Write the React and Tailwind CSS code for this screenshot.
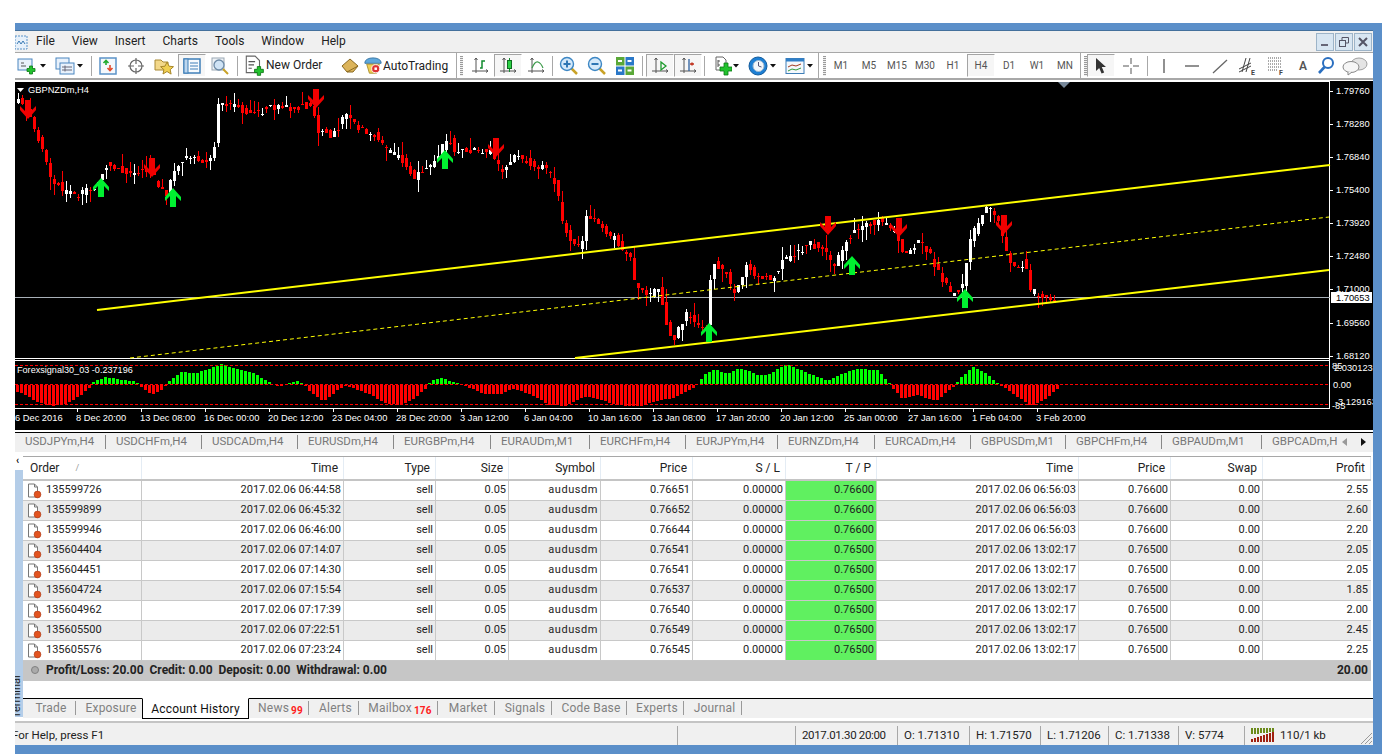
const PRICE = [[14,100],[18,102],[28,112],[40,145],[50,175],[62,190],[80,195],[95,185],[105,165],[125,172],[140,170],[150,170],[165,195],[175,165],[190,155],[205,165],[213,157],[218,103],[235,105],[250,115],[270,108],[290,108],[310,105],[318,130],[330,135],[340,125],[343,118],[349,118],[355,127],[365,130],[375,135],[385,150],[395,155],[405,165],[415,178],[425,168],[435,160],[442,148],[448,135],[455,155],[465,150],[475,150],[490,150],[498,165],[503,175],[510,160],[520,157],[530,162],[535,165],[545,170],[553,178],[558,200],[562,220],[568,238],[575,243],[580,250],[585,220],[592,215],[600,222],[608,235],[615,240],[622,250],[630,255],[635,285],[645,295],[660,290],[666,325],[672,340],[685,315],[700,325],[707,325],[711,262],[725,270],[733,295],[745,268],[770,280],[785,258],[810,243],[825,250],[833,270],[845,240],[860,225],[880,220],[895,235],[905,255],[920,240],[935,265],[950,295],[962,285],[970,240],[985,210],[997,215],[1005,250],[1015,270],[1025,260],[1030,290],[1040,297],[1056,300]]

const HIST = [[16,-7],[25,-10],[35,-17],[50,-21],[65,-19],[80,-10],[88,-3],[92,2],[105,7],[120,4],[133,3],[140,-2],[150,-10],[160,-5],[165,0],[170,5],[180,12],[195,11],[205,14],[220,20],[235,15],[250,12],[262,5],[270,1],[278,-2],[290,2],[295,3],[303,0],[310,-8],[322,-17],[335,-6],[345,-1],[352,-3],[370,-10],[385,-19],[400,-20],[415,-12],[425,-3],[430,3],[440,6],[454,1],[463,-1],[476,-6],[483,-9],[499,-9],[511,-4],[522,-7],[533,-11],[547,-20],[565,-21],[576,-15],[586,-11],[597,-14],[611,-19],[626,-21],[640,-21],[654,-16],[672,-13],[686,-6],[695,-1],[704,10],[713,15],[726,10],[736,15],[747,14],[756,9],[767,9],[778,16],[786,20],[797,15],[811,9],[827,3],[836,8],[854,15],[877,14],[886,3],[894,-6],[901,-14],[915,-10],[935,-16],[947,-6],[954,0],[961,8],[972,17],[985,11],[995,1],[1001,-1],[1010,-8],[1030,-21],[1045,-13],[1060,-1]]

const PRICE_LABELS = [['1.79760',91],['1.78280',124],['1.76840',157],['1.75400',190],['1.73920',223],['1.72480',256],['1.71000',289],['1.69560',323],['1.68120',356]]
const TIME_LABELS = ['6 Dec 2016','8 Dec 20:00','13 Dec 08:00','16 Dec 00:00','20 Dec 12:00','23 Dec 04:00','28 Dec 20:00','3 Jan 12:00','6 Jan 04:00','10 Jan 16:00','13 Jan 08:00','17 Jan 20:00','20 Jan 12:00','25 Jan 00:00','27 Jan 16:00','1 Feb 04:00','3 Feb 20:00']
const RED_ARROWS = [[28,100],[152,158],[316,89],[496,138],[828,216],[899,218],[1004,215]]
const GREEN_ARROWS = [[101,178],[173,188],[445,150],[709,323],[852,256],[965,289]]

const CHART_TABS = [['USDJPYm,H4',91],['USDCHFm,H4',96],['USDCADm,H4',96],['EURUSDm,H4',96],['EURGBPm,H4',97],['EURAUDm,M1',99],['EURCHFm,H4',96],['EURJPYm,H4',92],['EURNZDm,H4',97],['EURCADm,H4',96],['GBPUSDm,M1',95],['GBPCHFm,H4',96],['GBPAUDm,M1',100]]

const ROWS = [
  ['135599726','2017.02.06 06:44:58','0.76651','0.76600','2017.02.06 06:56:03','0.76600','2.55'],
  ['135599899','2017.02.06 06:45:32','0.76652','0.76600','2017.02.06 06:56:03','0.76600','2.60'],
  ['135599946','2017.02.06 06:46:00','0.76644','0.76600','2017.02.06 06:56:03','0.76600','2.20'],
  ['135604404','2017.02.06 07:14:07','0.76541','0.76500','2017.02.06 13:02:17','0.76500','2.05'],
  ['135604451','2017.02.06 07:14:30','0.76541','0.76500','2017.02.06 13:02:17','0.76500','2.05'],
  ['135604724','2017.02.06 07:15:54','0.76537','0.76500','2017.02.06 13:02:17','0.76500','1.85'],
  ['135604962','2017.02.06 07:17:39','0.76540','0.76500','2017.02.06 13:02:17','0.76500','2.00'],
  ['135605500','2017.02.06 07:22:51','0.76549','0.76500','2017.02.06 13:02:17','0.76500','2.45'],
  ['135605576','2017.02.06 07:23:24','0.76545','0.76500','2017.02.06 13:02:17','0.76500','2.25'],
]

const COLS = 'grid grid-cols-[119px_202px_92px_73px_92px_92px_93px_91px_202px_92px_92px_108px]'
const HEAD = ['Time','Type','Size','Symbol','Price','S / L','T / P','Time','Price','Swap','Profit']
const CELL = 'flex items-center justify-end pr-[2px] pb-[2px] border-r border-b border-[#c8c8c8]'

const interp = (pts, x) => {
  for (let i = 1; i < pts.length; i++) {
    if (x <= pts[i][0]) {
      const [x0, y0] = pts[i - 1]
      const [x1, y1] = pts[i]
      return y0 + ((y1 - y0) * (x - x0)) / (x1 - x0)
    }
  }
  return pts[pts.length - 1][1]
}

const noise = (n) => {
  const v = Math.sin(n * 12.9898) * 43758.5453
  return v - Math.floor(v)
}

function Candles() {
  const bars = []
  for (let i = 0; i < 260; i++) {
    const x = 18 + i * 4
    const open = interp(PRICE, x - 4) + (noise(i + 1) - 0.5) * 8
    const close = interp(PRICE, x) + (noise(i + 300) - 0.5) * 8
    const up = close < open
    const top = Math.round(Math.min(open, close))
    const bottom = Math.round(Math.max(open, close))
    const above = Math.round(noise(i + 600) ** 2 * 13)
    const below = Math.round(noise(i + 900) ** 2 * 13)
    bars.push(
      <g key={i} fill={up ? '#ffffff' : '#ff0000'}>
        <rect x={x} y={top - above} width="1" height={bottom - top + above + below} />
        <rect x={x - 1} y={top} width="3" height={Math.max(bottom - top, 1)} />
      </g>
    )
  }
  return bars
}

function Histogram() {
  const bars = []
  for (let x = 16; x < 1060; x += 4) {
    const v = Math.round(interp(HIST, x))
    if (v === 0) continue
    bars.push(<rect key={x} x={x} y={v > 0 ? 384 - v : 385} width="3" height={Math.abs(v)} fill={v > 0 ? '#00ff00' : '#ff0000'} />)
  }
  return bars
}

function Chart() {
  return (
    <svg width="1358" height="349" viewBox="15 81 1358 349" className="block font-['Liberation_Sans',sans-serif]">
      <rect x="15" y="81" width="1358" height="349" fill="#000" />
      <g shapeRendering="crispEdges">
        <rect x="15" y="81" width="1315" height="1" fill="#fff" />
        <rect x="1329" y="81" width="1" height="327" fill="#fff" />
        <rect x="15" y="358" width="1315" height="1" fill="#fff" />
        <rect x="15" y="360" width="1315" height="1" fill="#fff" />
        <rect x="15" y="408" width="1315" height="1" fill="#fff" />
        <rect x="15" y="297" width="1315" height="1" fill="#a8b0b8" />
        {PRICE_LABELS.map(([, y]) => <rect key={y} x="1330" y={y} width="3" height="1" fill="#fff" />)}
        {TIME_LABELS.map((_, i) => <rect key={i} x={13 + i * 64} y="408" width="1" height="4" fill="#fff" />)}
      </g>
      <polygon points="1058,82 1070,82 1064,88" fill="#77889a" />
      <g shapeRendering="crispEdges">
        <Candles />
      </g>
      <line x1="97" y1="310" x2="1330" y2="165" stroke="#ffff00" strokeWidth="2" />
      <line x1="575" y1="358" x2="1329" y2="270" stroke="#ffff00" strokeWidth="2" />
      <line x1="130" y1="358" x2="1329" y2="217" stroke="#ffff00" strokeWidth="1" strokeDasharray="4 3" />
      {RED_ARROWS.map(([x, y]) => (
        <polygon key={x} points={`${x - 3},${y} ${x + 3},${y} ${x + 3},${y + 11} ${x + 8},${y + 6} ${x + 8},${y + 10} ${x},${y + 19} ${x - 8},${y + 10} ${x - 8},${y + 6} ${x - 3},${y + 11}`} fill="#f00000" />
      ))}
      {GREEN_ARROWS.map(([x, y]) => (
        <polygon key={x} points={`${x},${y} ${x + 8},${y + 9} ${x + 8},${y + 13} ${x + 3},${y + 8} ${x + 3},${y + 19} ${x - 3},${y + 19} ${x - 3},${y + 8} ${x - 8},${y + 13} ${x - 8},${y + 9}`} fill="#00f030" />
      ))}
      <polygon points="17,88 24,88 20.5,92" fill="#fff" />
      <text x="28" y="93" fontSize="9.3" fill="#fff">GBPNZDm,H4</text>
      <Histogram />
      <g stroke="#ff0000" strokeDasharray="3 2" shapeRendering="crispEdges">
        <line x1="15" y1="365.5" x2="1329" y2="365.5" />
        <line x1="15" y1="384.5" x2="1329" y2="384.5" />
        <line x1="15" y1="404.5" x2="1329" y2="404.5" />
      </g>
      <text x="17" y="373" fontSize="9.1" fill="#fff">Forexsignal30_03 -0.237196</text>
      <g fontSize="9.3" fill="#fff">
        {PRICE_LABELS.map(([label, y]) => <text key={y} x="1336" y={y + 3}>{label}</text>)}
        {TIME_LABELS.map((label, i) => <text key={i} x={12 + i * 64 + (i === 0 ? 3 : 0)} y="421">{label}</text>)}
        <text x="1332" y="369">85</text>
        <text x="1334" y="371">2.030123</text>
        <text x="1333" y="388">0.00</text>
        <text x="1335" y="405">-3.129163</text>
        <text x="1332" y="409">-85</text>
      </g>
      <rect x="1331" y="292" width="41" height="11" fill="#fff" />
      <text x="1336" y="301" fontSize="9.3" fill="#000">1.70653</text>
    </svg>
  )
}

function Btn({ w, active, children, className = '' }) {
  return (
    <div style={{ width: w }} className={`h-[23px] flex items-center justify-center shrink-0 ${active ? 'border border-t-[#a4a4a4] border-l-[#a4a4a4] border-r-white border-b-white bg-[#f6f6f6]' : ''} ${className}`}>
      {children}
    </div>
  )
}

const Sep = ({ w = 5 }) => (
  <div style={{ width: w }} className="h-[20px] flex justify-center shrink-0">
    <div className="w-px h-full bg-[#a8a8a8]" />
  </div>
)

const Divider = ({ w = 5 }) => (
  <div style={{ width: w }} className="h-[26px] flex justify-center shrink-0">
    <div className="w-px h-full bg-[#a8a8a8]" />
  </div>
)

const Grip = ({ w = 5 }) => (
  <div style={{ width: w }} className="h-[20px] flex justify-center shrink-0">
    <div className="w-[3px] h-full bg-[repeating-linear-gradient(#9a9a9a_0_1px,#f0f0f0_1px_2px)]" />
  </div>
)

const Caret = ({ w = 10 }) => (
  <div style={{ width: w }} className="flex justify-center shrink-0">
    <svg width="6" height="4"><polygon points="0,0 6,0 3,3.5" fill="#111" /></svg>
  </div>
)

const Ico = ({ children, size = 20 }) => (
  <svg width={size} height={size} viewBox="0 0 20 20" fill="none">{children}</svg>
)

const Plus = ({ x = 10, y = 10 }) => (
  <path transform={`translate(${x} ${y})`} d="M2.5 0h3v2.5H8v3H5.5V8h-3V5.5H0v-3h2.5z" fill="#22c22e" stroke="#0b7a14" strokeWidth=".8" />
)

const Axes = () => (
  <path d="M6 2v15M2 15h16M4.5 4L6 2l1.5 2M16 13.5l2 1.5-2 1.5" stroke="#555" />
)

const Lens = ({ sign }) => (
  <>
    <path d="M12 12l6 6" stroke="#c9a227" strokeWidth="2.5" />
    <circle cx="8" cy="8" r="6.5" fill="#d5e9fa" stroke="#3d87c4" strokeWidth="1.4" />
    <path d={sign === '+' ? 'M4.5 8h7M8 4.5v7' : 'M4.5 8h7'} stroke="#2f77b5" strokeWidth="2" />
  </>
)

function Toolbar() {
  return (
    <div className="h-[26px] flex items-center border-t border-[#a8a8a8] pl-[2px] shrink-0 text-[#222]">
      <Btn w={20}>
        <Ico>
          <rect x="1" y="3" width="14" height="11" fill="#e8f1fb" stroke="#4a86c0" />
          <path d="M4 7h3M4 10h5" stroke="#555" />
          <Plus />
        </Ico>
      </Btn>
      <Caret w={12} />
      <Btn w={20} className="ml-[6px]">
        <Ico>
          <rect x="1" y="2" width="13" height="11" fill="#e8f1fb" stroke="#4a86c0" />
          <rect x="5" y="7" width="14" height="11" fill="#e8f1fb" stroke="#4a86c0" />
          <path d="M7 11h10M7 14h10M10 9.5v6" stroke="#667" />
        </Ico>
      </Btn>
      <Caret />
      <Sep w={13} />
      <Btn w={20}>
        <Ico>
          <rect x="2" y="2" width="16" height="16" fill="#f4f8fc" stroke="#5b93c8" strokeWidth="1.5" />
          <path d="M8 9V5M5.5 7L8 4.5 10.5 7" stroke="#1faa2e" strokeWidth="1.6" />
          <path d="M12 9v5M9.5 12l2.5 2.5 2.5-2.5" stroke="#e2492a" strokeWidth="1.6" />
        </Ico>
      </Btn>
      <Btn w={28} className="ml-[4px]">
        <Ico>
          <circle cx="10" cy="10" r="6" stroke="#666" strokeWidth="1.2" />
          <path d="M10 2v6M10 12v6M2 10h6M12 10h6" stroke="#666" strokeWidth="1.2" />
        </Ico>
      </Btn>
      <Btn w={28}>
        <Ico>
          <path d="M1 4h6l2 2h5v8H1z" fill="#f3d88a" stroke="#a98a35" />
          <path d="M13 6l2 4.2 4.5.5-3.3 3 .9 4.4L13 15.5 9 18l.9-4.3-3.3-3 4.4-.5z" fill="#f0cf52" stroke="#a8872a" />
        </Ico>
      </Btn>
      <Btn w={28} active>
        <Ico>
          <rect x="2" y="3" width="16" height="14" fill="#f6fafd" stroke="#3f7fb8" strokeWidth="1.5" />
          <rect x="2" y="3" width="4" height="14" fill="#bcd6ee" stroke="#3f7fb8" />
          <path d="M8 7h8M8 10h8M8 13h8" stroke="#3f7fb8" />
        </Ico>
      </Btn>
      <Btn w={28}>
        <Ico>
          <rect x="2" y="2" width="12" height="12" fill="#eef2f6" stroke="#9aa7b3" />
          <circle cx="9" cy="9" r="5" fill="#cfe3f5" stroke="#6d8aa6" strokeWidth="1.3" />
          <path d="M13 13l5 5" stroke="#c9a227" strokeWidth="2" />
        </Ico>
      </Btn>
      <Sep w={6} />
      <Btn w={90} className="justify-start">
        <div className="ml-[3px] mr-[1px]">
          <Ico size={22}>
            <path d="M3 1h8l4 4v11H3z" fill="#fff" stroke="#666" />
            <path d="M5 6h6M5 9h5M5 12h3" stroke="#555" />
            <Plus x={10.5} y={10.5} />
          </Ico>
        </div>
        <span className="text-[12px] -mt-[1px]">New Order</span>
      </Btn>
      <Btn w={28} className="ml-[6px]">
        <Ico>
          <path d="M2 10l8-7 8 7-5 6H7z" fill="#dcb45a" stroke="#8a6a22" />
          <path d="M7 16l11-6" stroke="#8a6a22" />
        </Ico>
      </Btn>
      <Btn w={90} className="justify-start">
        <div className="mr-[1px]">
          <Ico size={18}>
            <path d="M1 6a9 5 0 0 1 18 0v1H1z" fill="#5fa8dc" stroke="#2f6f9f" />
            <path d="M3 8h14l-3 10H6z" fill="#f1cf55" stroke="#a78d2d" />
            <circle cx="13" cy="13" r="4.5" fill="#d33" stroke="#fff" />
            <rect x="11.6" y="11.6" width="2.8" height="2.8" fill="#fff" />
          </Ico>
        </div>
        <span className="text-[12px]">AutoTrading</span>
      </Btn>
      <Divider />
      <Grip />
      <Btn w={28} className="ml-[2px]">
        <Ico><Axes /><path d="M10 12h2V5h3" stroke="#128a2e" strokeWidth="1.5" /></Ico>
      </Btn>
      <Btn w={28} active>
        <Ico>
          <Axes />
          <path d="M11.5 2v14" stroke="#128a2e" />
          <rect x="9.5" y="4.5" width="4" height="8" fill="#2bd044" stroke="#0d6d20" />
        </Ico>
      </Btn>
      <Btn w={28}>
        <Ico><Axes /><path d="M6 12q3-7 6-6t5 6" stroke="#3a9a48" strokeWidth="1.2" /></Ico>
      </Btn>
      <Sep w={4} />
      <Btn w={28} className="ml-[1px]"><Ico><Lens sign="+" /></Ico></Btn>
      <Btn w={28}><Ico><Lens sign="-" /></Ico></Btn>
      <Btn w={28}>
        <Ico>
          <rect x="1" y="1" width="8.5" height="8.5" fill="#5aa838" />
          <rect x="10.5" y="1" width="8.5" height="8.5" fill="#2a78c8" />
          <rect x="1" y="10.5" width="8.5" height="8.5" fill="#2a78c8" />
          <rect x="10.5" y="10.5" width="8.5" height="8.5" fill="#5aa838" />
          <path d="M3 5h4M12.5 5h4M3 14.5h4M12.5 14.5h4" stroke="#fff" strokeWidth="2" />
        </Ico>
      </Btn>
      <Sep w={6} />
      <Btn w={28} active className="ml-[1px]">
        <Ico><Axes /><path d="M11 6l5 4-5 4z" stroke="#1c9a2c" strokeWidth="1.3" /></Ico>
      </Btn>
      <Btn w={28} active>
        <Ico><Axes /><path d="M11 3v12" stroke="#2a5f9e" strokeWidth="1.3" /><path d="M12 8h4M14 6.5v3" stroke="#c0301c" strokeWidth="1.5" /></Ico>
      </Btn>
      <Sep w={4} />
      <Btn w={18} className="ml-[8px]">
        <svg width="18" height="20" viewBox="0 0 18 20" fill="none">
          <path d="M2 1h7l3 3v10H2z" fill="#fff" stroke="#666" />
          <path d="M4 4v7M4 5h2M4 9h2" stroke="#555" />
          <path transform="translate(6 7)" d="M4 0h4v4h4v4H8v4H4V8H0V4h4z" fill="#22c22e" stroke="#0b7a14" strokeWidth=".8" />
        </svg>
      </Btn>
      <Caret w={8} />
      <Btn w={20} className="ml-[8px]">
        <Ico>
          <circle cx="10" cy="10" r="9" fill="#1d7fd4" stroke="#145c9c" />
          <circle cx="10.5" cy="10" r="5.5" fill="#f2f7fb" stroke="#9fb9cf" />
          <path d="M10.5 6v4l3 1" stroke="#557" />
        </Ico>
      </Btn>
      <Caret />
      <Btn w={20} className="ml-[7px]">
        <Ico>
          <rect x="1" y="2.5" width="18" height="15" fill="#f4f8fc" stroke="#3f7fb8" />
          <rect x="1" y="2.5" width="18" height="3" fill="#2f7fc8" />
          <path d="M3 11l4-2 4 1 5-2" stroke="#a03a20" />
          <path d="M3 15l4-2 4 1 5-2" stroke="#2f9a3a" />
        </Ico>
      </Btn>
      <Caret />
      <Divider w={7} />
      <Grip w={4} />
      <div className="flex text-[10px] text-[#555] ml-[1px]">
        {['M1','M5','M15','M30','H1','H4','D1','W1','MN'].map((t) => (
          <Btn key={t} w={28} active={t === 'H4'}>{t}</Btn>
        ))}
      </div>
      <Divider w={3} />
      <Grip w={6} />
      <Btn w={28} active className="-ml-[1px]">
        <svg width="14" height="18" viewBox="0 0 14 18"><path d="M2 1v13l3.2-3 2.4 5.5 2.6-1-2.4-5.4H12z" fill="#333" /></svg>
      </Btn>
      <Btn w={28} className="ml-[2px]">
        <Ico><path d="M10 2v6M10 12v6M2 10h6M12 10h6" stroke="#555" /></Ico>
      </Btn>
      <Sep w={4} />
      <Btn w={28} className="ml-[1px]"><Ico><path d="M10 3v14" stroke="#555" strokeWidth="1.3" /></Ico></Btn>
      <Btn w={28}><Ico><path d="M3 10h14" stroke="#555" strokeWidth="1.3" /></Ico></Btn>
      <Btn w={28}><Ico><path d="M3 17L17 4" stroke="#666" strokeWidth="1.3" /></Ico></Btn>
      <Btn w={28}>
        <Ico>
          <path d="M1 13l12-6M1 16l12-6M4 16l4-14M8 16l4-14" stroke="#444" />
          <text x="13" y="19" fontSize="7" fontWeight="700" fill="#444">E</text>
        </Ico>
      </Btn>
      <Btn w={28}>
        <Ico>
          <path d="M2 2h14M2 5h14M2 8h14M2 11h14M2 14h10" stroke="#555" strokeDasharray="1 1" />
          <text x="13" y="19" fontSize="7" fontWeight="700" fill="#444">F</text>
        </Ico>
      </Btn>
      <Btn w={26}><span className="text-[12px] font-semibold text-[#555]">A</span></Btn>
      <Btn w={20}>
        <Ico>
          <circle cx="12" cy="7" r="5" stroke="#2a6fc0" strokeWidth="2" />
          <path d="M8.5 11L3 17" stroke="#2a6fc0" strokeWidth="2.6" />
        </Ico>
      </Btn>
      <Btn w={28} className="ml-[5px]">
        <svg width="26" height="20" viewBox="0 0 26 20" fill="none">
          <ellipse cx="17" cy="8" rx="8" ry="6" fill="#e4e4e4" stroke="#a0a0a0" />
          <ellipse cx="9" cy="11" rx="8" ry="5.5" fill="#f6f6f6" stroke="#888" />
          <path d="M6 16v3l4-3" fill="#f6f6f6" stroke="#888" />
        </svg>
      </Btn>
    </div>
  )
}

const OrderIcon = () => (
  <svg width="15" height="16" viewBox="0 0 15 16" fill="none" className="shrink-0">
    <path d="M1.5 1h6l3 3v10h-9z" fill="#fff" stroke="#777" />
    <path d="M7.5 1v3h3" stroke="#777" />
    <circle cx="10.5" cy="11.5" r="3.4" fill="#e2531f" stroke="#a83412" strokeWidth=".6" />
  </svg>
)

function HistoryTable() {
  return (
    <div className="w-[1348px] text-[11px] text-[#222] leading-none">
      <div className={`${COLS} h-[25px] border-t border-[#a8a8a8] border-b-2 border-b-[#c4c4c4] bg-white text-[12px]`}>
        <div className="flex items-center pl-[7px] border-r border-[#e4ecf4]">
          Order<span className="ml-[16px] text-[9px] text-[#999]">/</span>
        </div>
        {HEAD.map((h, i) => (
          <div key={i} className="flex items-center justify-end pr-[5px] border-r border-[#e4ecf4]">{h}</div>
        ))}
      </div>
      {ROWS.map((r, i) => (
        <div key={r[0]} className={`${COLS} h-[20px] ${i % 2 ? 'bg-[#ebebeb]' : 'bg-white'}`}>
          <div className="flex items-center gap-[4px] pl-[4px] border-r border-b border-[#c8c8c8]">
            <OrderIcon /><span className="pb-[2px]">{r[0]}</span>
          </div>
          <div className={CELL}>{r[1]}</div>
          <div className={CELL}>sell</div>
          <div className={CELL}>0.05</div>
          <div className={`${CELL} tracking-[0.55px]`}>audusdm</div>
          <div className={CELL}>{r[2]}</div>
          <div className={CELL}>0.00000</div>
          <div className={`${CELL} bg-[#60f060]`}>{r[3]}</div>
          <div className={CELL}>{r[4]}</div>
          <div className={CELL}>{r[5]}</div>
          <div className={CELL}>0.00</div>
          <div className="flex items-center justify-end pr-[3px] pb-[2px] border-b border-[#c8c8c8]">{r[6]}</div>
        </div>
      ))}
      <div className="h-[20px] bg-[#c6c6c6] flex items-center font-bold text-[12px] pl-[7px] pr-[3px] pb-[2px]">
        <svg width="10" height="10" className="mr-[6px] shrink-0">
          <circle cx="5" cy="5" r="3.5" fill="#aaa" stroke="#808080" />
        </svg>
        <span className="whitespace-pre">Profit/Loss: 20.00  Credit: 0.00  Deposit: 0.00  Withdrawal: 0.00</span>
        <span className="ml-auto">20.00</span>
      </div>
    </div>
  )
}

function BottomTab({ w, children }) {
  return (
    <div style={{ width: w }} className="h-full flex items-center shrink-0">
      <div className="w-full h-[14px] border-r border-[#999] pl-[4px] flex items-center justify-center">{children}</div>
    </div>
  )
}

function TerminalTabs() {
  return (
    <div className="h-[20px] flex border-t border-black bg-[#f0f0f0] text-[12px] tracking-[0.2px] text-[#808080] pb-[2px] -mt-px relative">
      <BottomTab w={53}>Trade</BottomTab>
      <div className="w-[66px] h-full flex items-center justify-center pl-[4px] shrink-0">Exposure</div>
      <div className="w-[107px] h-[21px] -mt-px bg-white border-x border-b border-black border-t border-t-white text-[#111] flex items-center justify-center shrink-0">Account History</div>
      <BottomTab w={60}>News<sub className="text-[10px] font-bold text-[#ff2020] ml-[2px] top-[3px]">99</sub></BottomTab>
      <BottomTab w={50}>Alerts</BottomTab>
      <BottomTab w={79}>Mailbox<sub className="text-[10px] font-bold text-[#ff2020] ml-[2px] top-[3px]">176</sub></BottomTab>
      <BottomTab w={57}>Market</BottomTab>
      <BottomTab w={57}>Signals</BottomTab>
      <BottomTab w={75}>Code Base</BottomTab>
      <BottomTab w={57}>Experts</BottomTab>
      <BottomTab w={58}>Journal</BottomTab>
    </div>
  )
}

const StatusCell = ({ w, children }) => (
  <div style={{ width: w }} className="h-[20px] shrink-0 flex items-center border-l border-[#a8a8a8] pl-[6px] whitespace-nowrap">
    {children}
  </div>
)

function StatusBar() {
  return (
    <div className="h-[24px] flex items-center bg-[#f0f0f0] border-t-2 border-[#c4c4c4] pt-[3px] text-[11.5px] text-[#222] overflow-hidden relative shrink-0">
      <div className="w-[665px] -ml-[3px] shrink-0 whitespace-nowrap">For Help, press F1</div>
      <StatusCell w={118} />
      <StatusCell w={102}><span className="tracking-[-0.35px]">2017.01.30 20:00</span></StatusCell>
      <StatusCell w={72}>O: 1.71310</StatusCell>
      <StatusCell w={71}>H: 1.71570</StatusCell>
      <StatusCell w={68}>L: 1.71206</StatusCell>
      <StatusCell w={70}>C: 1.71338</StatusCell>
      <StatusCell w={66}>V: 5774</StatusCell>
      <StatusCell w={128}>
        <svg width="25" height="15" className="mr-[4px] shrink-0" shapeRendering="crispEdges">
          {Array.from({ length: 8 }, (_, i) => (
            <g key={i}>
              <rect x={i * 3} y={0} width="2" height={6 - Math.floor(i / 3)} fill="#6b8a1a" />
              <rect x={i * 3} y={14 - i - 3} width="2" height={i + 3} fill="#a02010" />
            </g>
          ))}
        </svg>
        110/1 kb
      </StatusCell>
      <svg width="14" height="14" className="absolute right-0 bottom-0">
        <path d="M13 2L2 13M13 6L6 13M13 10l-3 3" stroke="#9a9a9a" />
      </svg>
    </div>
  )
}

function WindowButton({ children }) {
  return (
    <div className="w-[18px] h-[18px] border border-[#9db4c8] bg-[#d8e6f2] flex items-center justify-center">
      {children}
    </div>
  )
}

export default function App() {
  return (
    <div className="w-[1382px] h-[754px] overflow-hidden bg-white pl-[15px] pt-[23px] font-['Roboto',sans-serif]">
      <div className="w-[1367px] h-[731px] bg-[#5b8fc9] pt-[8px] pr-[9px] pb-[8px]">
        <div className="h-full flex flex-col bg-white border-t border-[#44709c] -mt-px">
          {/* menu */}
          <div className="h-[21px] flex items-center bg-[#f0f0f0] text-[12px] text-[#222] shrink-0">
            <svg width="13" height="16" viewBox="0 0 13 16" fill="none" className="mr-[8px]">
              <rect x="0" y="2" width="12" height="13" fill="#e6f0fa" stroke="#5b93c8" strokeDasharray="2 1" />
              <path d="M2 10l2-3 2 3 2-3 2 3" stroke="#3a7ab4" />
            </svg>
            <div className="flex gap-[17px] pb-[2px]">
              {['File','View','Insert','Charts','Tools','Window','Help'].map((m) => <span key={m}>{m}</span>)}
            </div>
            <div className="ml-auto flex gap-[1px] pr-[1px]">
              <WindowButton><svg width="8" height="8"><rect x="0" y="6" width="7" height="2" fill="#667" /></svg></WindowButton>
              <WindowButton><svg width="10" height="10" fill="none" stroke="#556"><rect x="0.5" y="3.5" width="6" height="6" /><path d="M3 3V.5h6.5V6H7" /></svg></WindowButton>
              <WindowButton><svg width="10" height="10" stroke="#556" strokeWidth="2"><path d="M1 1l8 8M9 1l-8 8" /></svg></WindowButton>
            </div>
          </div>
          <Toolbar />
          <div className="h-[2px] bg-[#a8a8a8] shrink-0" />
          <div className="h-px shrink-0" />
          <Chart />
          <div className="h-[2px] bg-white shrink-0" />
          <div className="h-px bg-black shrink-0" />
          {/* chart tabs */}
          <div className="h-[19px] flex bg-[#f0f0f0] text-[11.5px] text-[#777] shrink-0 overflow-hidden relative pb-[2px]">
            {CHART_TABS.map(([t, w]) => (
              <div key={t} style={{ width: w }} className="h-full shrink-0 flex items-center">
                <div className="w-full h-[14px] border-r border-[#888] pl-[10px] flex items-center whitespace-nowrap">{t}</div>
              </div>
            ))}
            <div className="h-full flex items-center pl-[10px] whitespace-nowrap w-[75px] overflow-hidden shrink-0">GBPCADm,H4</div>
            <div className="flex items-center gap-[14px] bg-[#f0f0f0] pl-[5px]">
              <svg width="5" height="8"><polygon points="5,0 5,8 0,4" fill="#999" /></svg>
              <svg width="5" height="8"><polygon points="0,0 0,8 5,4" fill="#111" /></svg>
            </div>
          </div>
          {/* terminal */}
          <div className="flex-1 flex min-h-0 relative">
            <div className="w-[8px] shrink-0 flex flex-col">
              <div className="h-[18px] bg-white text-[10px] leading-none pt-[4px] font-bold pl-[1px]">‹</div>
              <div className="flex-1 bg-[#b4cde8] overflow-hidden flex items-end mb-[4px]">
                <span className="block origin-bottom-left -rotate-90 translate-x-[7px] text-[11px] leading-none text-[#222] whitespace-nowrap -mb-[1px]">Terminal</span>
              </div>
            </div>
            <div className="flex-1 flex flex-col min-w-0 pt-[4px]">
              <HistoryTable />
              <div className="h-[18px] shrink-0" />
              <TerminalTabs />
              <div className="flex-1 bg-white" />
            </div>
          </div>
          <StatusBar />
        </div>
      </div>
    </div>
  )
}
